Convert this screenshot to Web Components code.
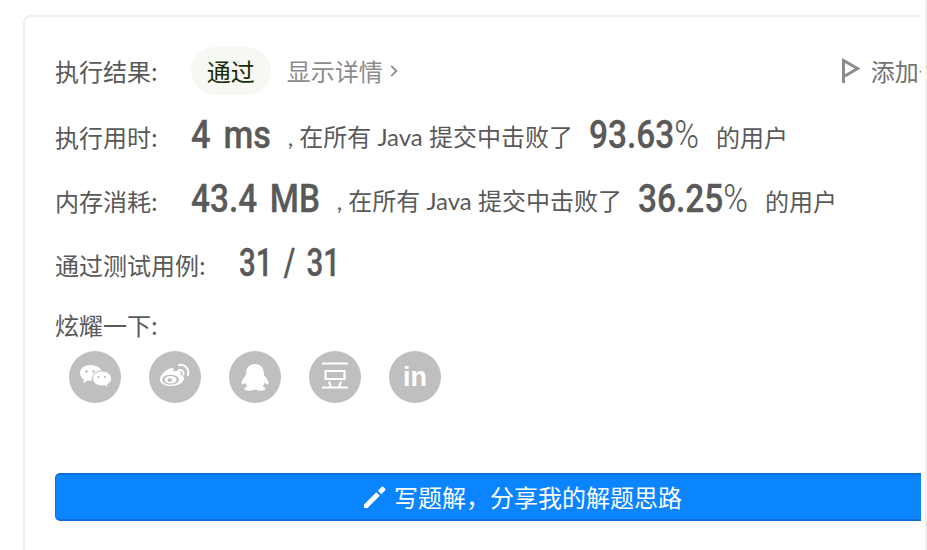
<!DOCTYPE html>
<html lang="zh"><head><meta charset="utf-8">
<style>
html,body{margin:0;padding:0;height:550px;width:927px;overflow:hidden;background:#fff;font-family:"Noto Sans CJK SC","Noto Sans",sans-serif}
</style></head><body>
<result-page></result-page>
<template id="t-page"><style>
:host{display:flex;width:927px;height:550px;box-sizing:border-box;overflow:hidden;background:#fff;padding:15px 0 0 23px}
.strip{flex:none;width:2px;margin-left:4px;margin-top:-15px;background:#f0f0f0}
result-card{flex:none;width:898px}
.next{margin-top:18px}
</style><result-card>
<result-row label="执行结果:">
  <status-badge>通过</status-badge><detail-link>显示详情</detail-link><flag-action>添加备注</flag-action>
</result-row>
<result-row class="next" label="执行用时:">
  <stat-value w="80">4 ms</stat-value><rank-note pre=", 在所有 Java 提交中击败了" pct="93.63"></rank-note>
</result-row>
<result-row class="next" style="margin-top:16px" label="内存消耗:">
  <stat-value w="129">43.4 MB</stat-value><rank-note pre=", 在所有 Java 提交中击败了" pct="36.25"></rank-note>
</result-row>
<result-row style="margin-top:16px" label="通过测试用例:">
  <stat-value w="101">31 / 31</stat-value>
</result-row>
<share-block></share-block>
<write-button>写题解&#xFF0C;分享我的解题思路</write-button>
</result-card><div class="strip"></div></template>

<template id="t-card"><style>
:host{display:block;box-sizing:border-box;height:600px;border:2px solid #f0f0f0;border-right:0;border-bottom:0;border-radius:8px 0 0 0;padding:30px 0 0 30px;overflow:hidden;color:#595959;font-size:24px;line-height:34px}
</style><slot></slot></template>

<template id="t-row"><style>
:host{display:flex;align-items:center;height:48px;white-space:nowrap}
.l{flex:none;margin-right:33px}
</style><span class="l"></span><slot></slot></template>

<template id="t-badge"><style>
:host{display:block;flex:none;height:48px;line-height:48px;padding:0 16px;border-radius:24px;background:#f6f9f3;color:#1a2c0a}
</style><slot></slot></template>

<template id="t-detail"><style>
:host{display:flex;align-items:center;flex:none;margin-left:16px;color:#8c8c8c}
svg{margin-left:6px;display:block}
</style><slot></slot><svg width="10" height="14" viewBox="0 0 10 14"><path d="M2.2 1.8 7.4 7 2.2 12.2" fill="none" stroke="#8c8c8c" stroke-width="1.8"/></svg></template>

<template id="t-flag"><style>
:host{display:flex;align-items:center;flex:none;margin-left:443px;color:#737373}
svg{display:block;margin-right:11px;margin-top:-2px}
</style><svg width="18" height="25" viewBox="0 0 18 25"><path d="M1.500 25V2.500L15.500 10.500 3 18" fill="none" stroke="#8c8c8c" stroke-width="3"/></svg><slot></slot></template>

<template id="t-stat"><style>
:host{display:block;flex:none;color:#595959;overflow:visible}
span{display:inline-block;transform-origin:0 50%;font-family:Roboto,"Noto Sans",sans-serif;font-weight:500;font-size:38px;line-height:34px;word-spacing:5px;position:relative;top:-1px;-webkit-text-stroke:.3px #595959}
</style><span><slot></slot></span></template>

<template id="t-rank"><style>
:host{display:flex;align-items:center;flex:none;margin-left:17px}
.a{font-family:Lato,"Noto Sans CJK SC",sans-serif}
.z{display:block;flex:none;width:110px;margin:0 17px 0 16px;position:relative;top:-1px}
.p{display:inline-block;transform-origin:0 50%;font-family:Roboto,"Noto Sans",sans-serif;font-weight:500;font-size:38px;line-height:34px;-webkit-text-stroke:.3px #595959}
.p i{font-style:normal;font-weight:300;-webkit-text-stroke:0}
</style><span class="a"></span><span class="z"><span class="p"><span class="n"></span><i>%</i></span></span><span>的用户</span></template>

<template id="t-share"><style>
:host{display:block;margin-top:19px}
.t{height:34px}
.icons{display:flex;gap:28px;margin:9px 0 0 14px}
.i{flex:none;width:52px;height:52px;border-radius:50%;background:#bfbfbf;display:flex;align-items:center;justify-content:center;overflow:hidden}
.in{font-family:"Liberation Sans",sans-serif;font-weight:700;font-size:27px;line-height:52px;color:#fff}
svg{display:block}
</style><div class="t">炫耀一下:</div><div class="icons">
<div class="i"><svg width="52" height="52" viewBox="0 0 52 52"><path d="M21 14C15.500 14 11 17.600 11 22c0 2.500 1.400 4.700 3.600 6.100L14.500 32l4-2.400c.9.200 1.800.4 2.700.4h1.500c-.4-5.500 3.700-10 10-10.300C31.400 16.300 26.800 14 21 14z" fill="#fff"/><path d="M42.500 27.500C42.500 23.300 38.300 20 33 20s-9.500 3.300-9.500 7.500S27.700 35 33 35c1 0 2-.2 2.900-.4L39 37l-.4-3.500c2.400-1.400 3.900-3.600 3.900-6z" fill="#fff" stroke="#bfbfbf" stroke-width="1"/><circle cx="17.500" cy="20.500" r="1.300" fill="#bfbfbf"/><circle cx="24.500" cy="20.500" r="1.300" fill="#bfbfbf"/><circle cx="29.500" cy="26" r="1.100" fill="#bfbfbf"/><circle cx="36" cy="26" r="1.100" fill="#bfbfbf"/></svg></div>
<div class="i"><svg width="52" height="52" viewBox="0 0 52 52"><path d="M22 35C15.500 35 11 32.500 11 28.500c0-4 5-9.500 10.500-11.300 3-1 3.800 1 3 3.500 3.200-1.200 7.400-1.500 7.300 1.300 0 .8-.2 1.300-.5 1.800 2 .6 3.700 1.800 3.700 3.700C35 31.500 29 35 22 35z" fill="#fff"/><ellipse cx="21.500" cy="28.800" rx="8.500" ry="5" fill="#bfbfbf"/><ellipse cx="21.500" cy="28.800" rx="6" ry="3.700" fill="#fff"/><circle cx="20.800" cy="29" r="2.100" fill="#bfbfbf"/><path d="M30 19c2.800-.5 5 1.800 4.500 4.600M30 14c6-1 10.500 4 9 10" fill="none" stroke="#fff" stroke-width="2" stroke-linecap="round"/></svg></div>
<div class="i"><svg width="52" height="52" viewBox="0 0 52 52"><path d="M26 13c-5.500 0-8.700 3.800-8.800 8.500 0 1.500-.2 2.300-.6 3-1.500 2-4.200 5-4.100 7.500.1 1.500 1 1.800 2.100 1l1.700-1.300c.4 1.500 1.100 2.700 2.200 3.800-1.800.5-3 1.200-3 2.300 0 1.800 4 2.200 6.800 1.700 1.300-.2 2.500-.8 3.700-.8s2.400.6 3.700.8c2.800.5 6.800.1 6.800-1.700 0-1.100-1.200-1.800-3-2.300 1.100-1.100 1.800-2.300 2.200-3.800l1.700 1.300c1.100.8 2 .5 2.100-1 .1-2.500-2.600-5.500-4.100-7.500-.4-.7-.6-1.500-.6-3C34.700 16.800 31.500 13 26 13z" fill="#fff"/></svg></div>
<div class="i"><svg width="52" height="52" viewBox="0 0 52 52" fill="none" stroke="#fff" stroke-width="2.200"><path d="M13 12.500H39M16.500 20H35.500V28H16.500zM20 30.500L21.800 35.500M32 30.500L30.200 35.500M13 36.500H39"/></svg></div>
<div class="i"><span class="in">in</span></div>
</div></template>

<template id="t-write"><style>
:host{display:flex;align-items:center;justify-content:center;box-sizing:border-box;width:934px;height:48px;margin:70px 0 0 0;background:#0a84ff;border:1px solid #0a6fd6;border-width:2px 0 2px 1px;border-radius:5px 0 0 5px;color:#fff}
svg{display:block;margin-right:7px}
</style><svg width="24" height="24" viewBox="0 0 24 24"><path d="M1 19.500V23h3.500L16.800 10.700 13.300 7.200zM22 5.500c.6-.6.6-1.400 0-2l-1.500-1.500c-.6-.6-1.400-.6-2 0L14.800 5.700 18.300 9.200z" fill="#fff"/></svg><slot></slot></template>

<script>
function fit(el,target){
  const w=el.getBoundingClientRect().width;
  if(w>0)el.style.transform='scaleX('+(target/w)+')';
}
function comp(name,tid,init){
  customElements.define(name,class extends HTMLElement{
    connectedCallback(){
      if(this.shadowRoot)return;
      const r=this.attachShadow({mode:'open'});
      r.appendChild(document.getElementById(tid).content.cloneNode(true));
      if(init)init(r,this);
    }
  });
}
comp('result-page','t-page');
comp('result-card','t-card');
comp('result-row','t-row',(r,h)=>{r.querySelector('.l').textContent=h.getAttribute('label');});
comp('status-badge','t-badge');
comp('detail-link','t-detail');
comp('flag-action','t-flag');
comp('stat-value','t-stat',(r,h)=>{const t=+h.getAttribute('w');h.style.width=t+'px';queueMicrotask(()=>fit(r.querySelector('span'),t));});
comp('rank-note','t-rank',(r,h)=>{r.querySelector('.a').textContent=h.getAttribute('pre');r.querySelector('.n').textContent=h.getAttribute('pct');queueMicrotask(()=>fit(r.querySelector('.p'),110));});
comp('share-block','t-share');
comp('write-button','t-write');
</script>
</body></html>
